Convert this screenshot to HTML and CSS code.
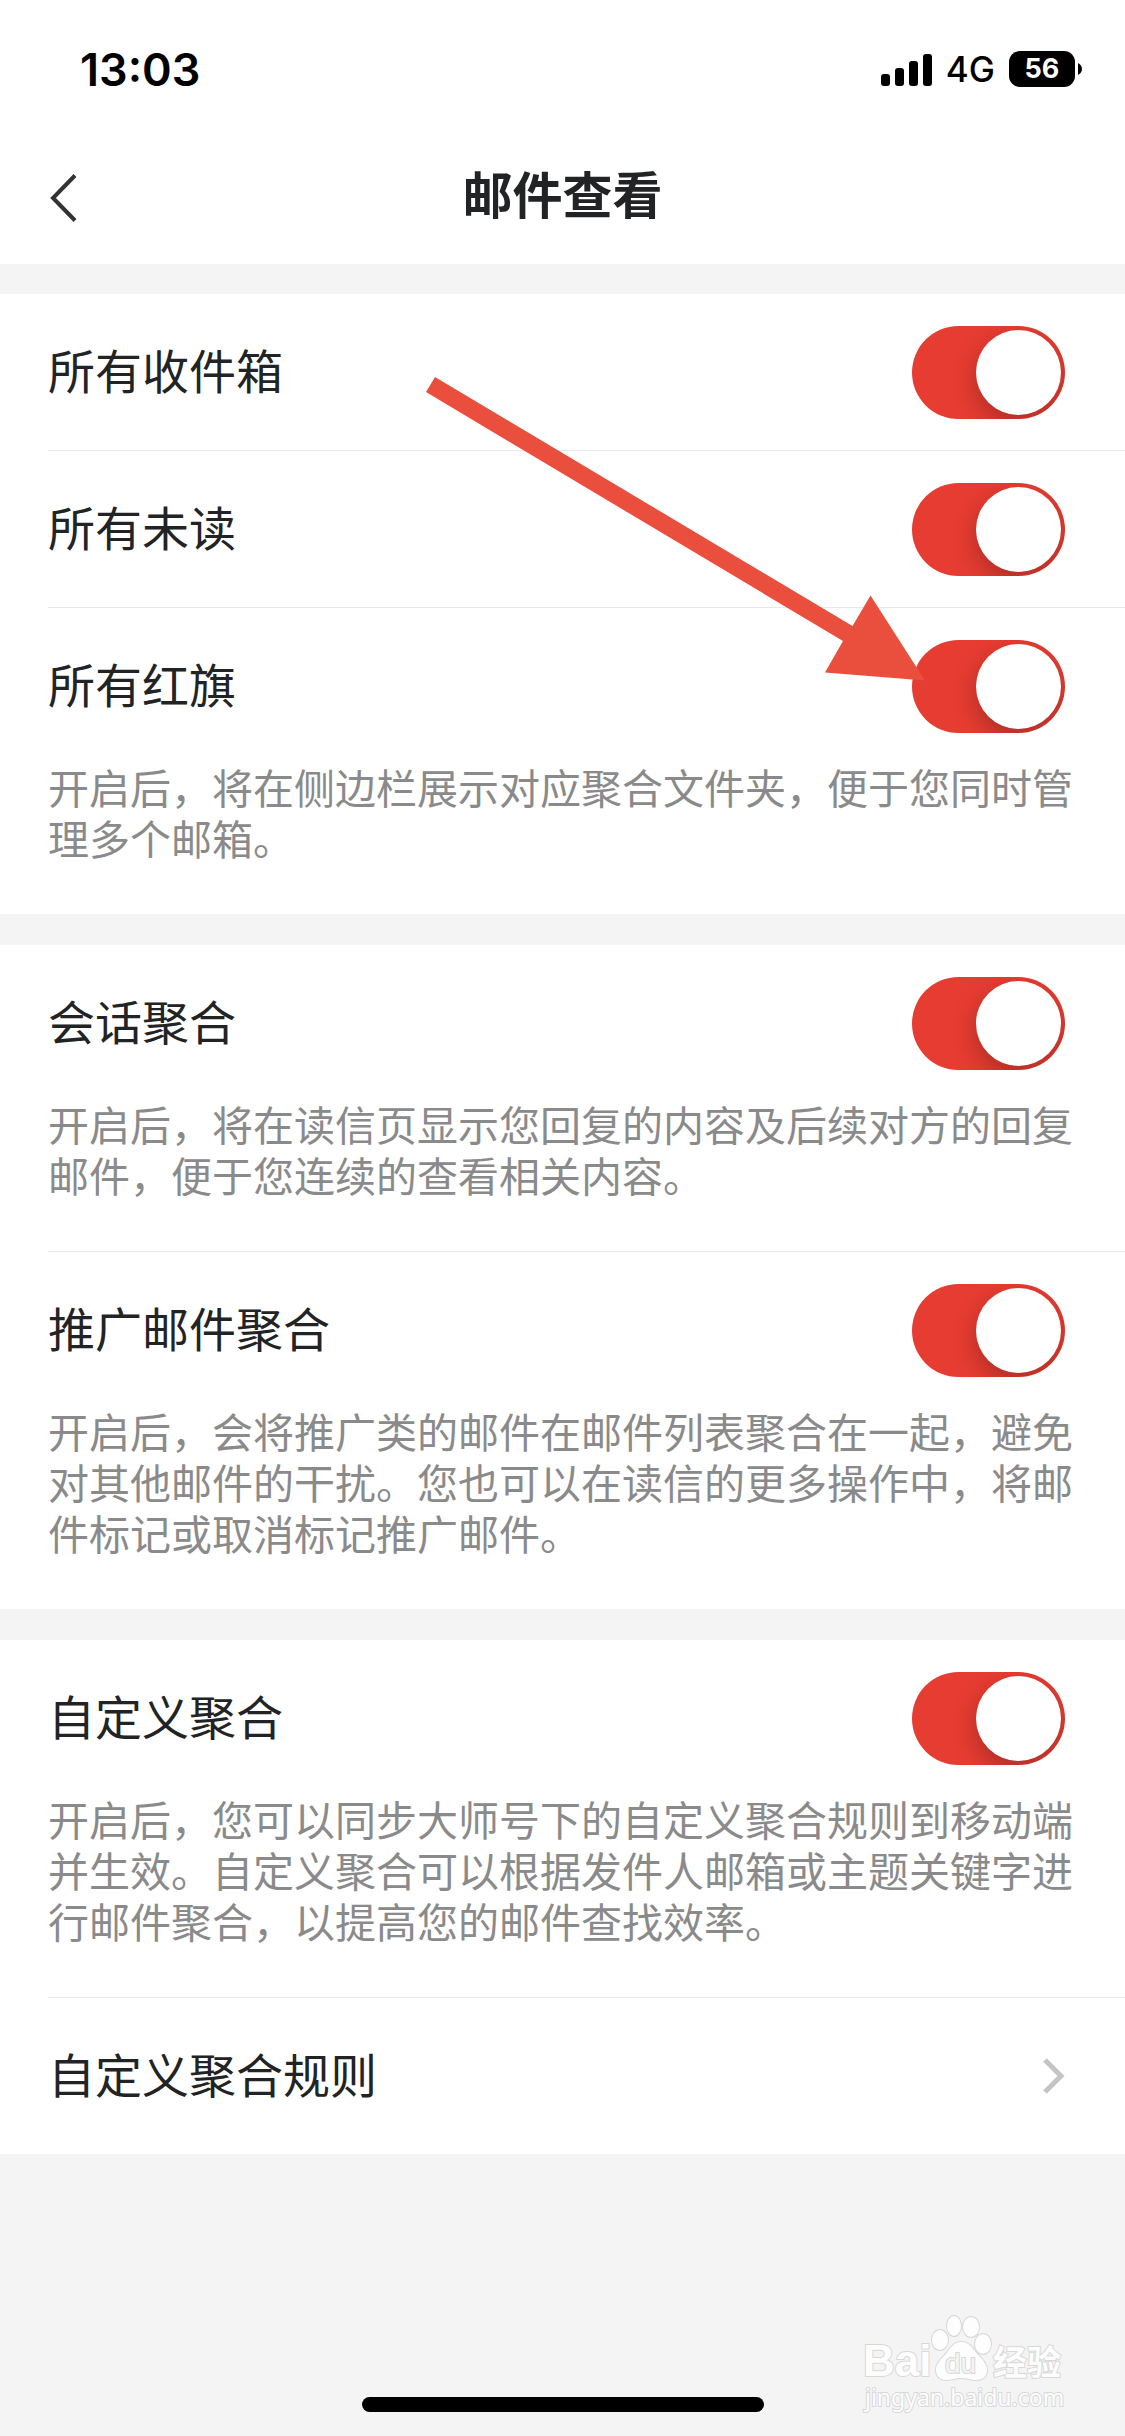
FILE: index.html
```
<!DOCTYPE html>
<html lang="zh-CN">
<head>
  <meta charset="UTF-8">
  <meta name="viewport" content="width=device-width, initial-scale=1">
  <title>邮件查看</title>
  <link rel="stylesheet" href="styles.css">
</head>
<body>
  <div class="page">
    <header class="header">
      <div class="status-bar">
        <span class="time">13:03</span>
        <div class="status-icons">
          <svg class="signal" viewBox="0 0 51 33" aria-hidden="true">
            <rect x="0" y="21" width="9" height="12" rx="3"/>
            <rect x="14" y="15" width="9" height="18" rx="3"/>
            <rect x="28" y="8" width="9" height="25" rx="3"/>
            <rect x="42" y="1" width="9" height="32" rx="3"/>
          </svg>
          <span class="network">4G</span>
          <div class="battery">
            <span class="battery-level">56</span>
            <svg class="battery-tip" viewBox="0 0 4 12" aria-hidden="true">
              <path d="M0 0c2 1 4 3 4 6s-2 5-4 6z"/>
            </svg>
          </div>
        </div>
      </div>
      <nav class="nav-bar">
        <button type="button" class="back-btn" aria-label="返回">
          <svg viewBox="0 0 28 48" aria-hidden="true">
            <path d="M25 1.500L3 24l22 22.500"/>
          </svg>
        </button>
        <h1 class="nav-title">邮件查看</h1>
      </nav>
    </header>

    <main class="settings">
      <section class="group">
        <div class="item">
          <div class="row">
            <label class="name" for="allInbox">所有收件箱</label>
            <input type="checkbox" class="switch" id="allInbox" checked>
          </div>
        </div>
        <div class="item">
          <div class="row">
            <label class="name" for="allUnread">所有未读</label>
            <input type="checkbox" class="switch" id="allUnread" checked>
          </div>
        </div>
        <div class="item">
          <div class="row">
            <label class="name" for="allFlagged">所有红旗</label>
            <input type="checkbox" class="switch" id="allFlagged" checked>
          </div>
          <p class="desc">开启后，将在侧边栏展示对应聚合文件夹，便于您同时管理多个邮箱。</p>
        </div>
        <!-- pointer to the red flag switch -->
        <svg class="arrow" viewBox="0 0 500 305" aria-hidden="true">
          <path d="M10 1L427.500 250 445.500 219.500 500 304.500 400 296.500 418 265 1 16z"/>
        </svg>
      </section>

      <section class="group">
        <div class="item">
          <div class="row">
            <label class="name" for="thread">会话聚合</label>
            <input type="checkbox" class="switch" id="thread" checked>
          </div>
          <p class="desc">开启后，将在读信页显示您回复的内容及后续对方的回复邮件，便于您连续的查看相关内容。</p>
        </div>
        <div class="item">
          <div class="row">
            <label class="name" for="promo">推广邮件聚合</label>
            <input type="checkbox" class="switch" id="promo" checked>
          </div>
          <p class="desc">开启后，会将推广类的邮件在邮件列表聚合在一起，避免对其他邮件的干扰。您也可以在读信的更多操作中，将邮件标记或取消标记推广邮件。</p>
        </div>
      </section>

      <section class="group">
        <div class="item">
          <div class="row">
            <label class="name" for="custom">自定义聚合</label>
            <input type="checkbox" class="switch" id="custom" checked>
          </div>
          <p class="desc">开启后，您可以同步大师号下的自定义聚合规则到移动端并生效。自定义聚合可以根据发件人邮箱或主题关键字进行邮件聚合，以提高您的邮件查找效率。</p>
        </div>
        <div class="item">
          <a class="row" href="#rules">
            <span class="name">自定义聚合规则</span>
            <svg class="chevron" viewBox="0 0 22 36" aria-hidden="true">
              <path d="M2 2l16 16L2 34"/>
            </svg>
          </a>
        </div>
      </section>
    </main>

    <footer class="footer">
      <svg class="watermark" viewBox="0 0 210 104" aria-hidden="true">
        <text class="wm-logo" x="3" y="60">Bai</text>
        <g class="wm-paw">
          <ellipse cx="80" cy="24" rx="8" ry="10"/>
          <ellipse cx="94" cy="10" rx="7" ry="10"/>
          <ellipse cx="111" cy="11" rx="8" ry="10"/>
          <ellipse cx="123" cy="28" rx="8" ry="10"/>
          <path d="M101 26c9 0 12 7 17 13 5 5 9 9 9 15 0 7-5 10-11 10-5 0-9-2-15-2s-10 2-15 2c-6 0-10-4-10-10s4-10 9-15c5-6 8-13 16-13z"/>
        </g>
        <text class="wm-du" x="85" y="57">du</text>
        <text class="wm-cn" x="133" y="59">经验</text>
        <text class="wm-url" x="5" y="90">jingyan.baidu.com</text>
      </svg>
      <div class="home-indicator"></div>
    </footer>
  </div>
</body>
</html>
```
FILE: styles.css
```
* {
  box-sizing: border-box;
}

body {
  margin: 0;
  background-color: #f4f4f4;
  color: #222325;
  font-family: "Noto Sans CJK SC", sans-serif;
}

.page {
  display: flex;
  flex-direction: column;
  min-height: 100vh;
}

/* header */
.header {
  background-color: #fff;
}

.status-bar {
  display: flex;
  align-items: center;
  justify-content: space-between;
  height: 132px;
  padding: 6px 43px 0 80px;
  color: #000;
  font-family: Inter, sans-serif;
}

.time {
  font-size: 45px;
  font-weight: 600;
}

.status-icons {
  display: flex;
  align-items: center;
  gap: 14px;
}

.signal {
  width: 51px;
  height: 33px;
}

.network {
  font-size: 35px;
  font-weight: 500;
}

.battery {
  display: flex;
  align-items: center;
  gap: 3px;
}

.battery-level {
  width: 66px;
  border-radius: 11px;
  background-color: #000;
  color: #fff;
  font-size: 27px;
  font-weight: 700;
  line-height: 36px;
  text-align: center;
}

.battery-tip {
  width: 4px;
  height: 12px;
}

.nav-bar {
  display: grid;
  grid-template-columns: 96px 1fr 96px;
  align-items: center;
  height: 132px;
}

.back-btn {
  display: flex;
  padding: 0 0 0 50px;
  border: none;
  background: none;
  cursor: pointer;
}

.back-btn svg {
  width: 28px;
  height: 48px;
  fill: none;
  stroke: #333;
  stroke-width: 4;
}

.nav-title {
  margin: 0;
  padding-bottom: 12px;
  font-size: 50px;
  font-weight: 600;
  line-height: 60px;
  text-align: center;
}

/* setting groups */
.settings {
  display: flex;
  flex-direction: column;
  gap: 31px;
  padding-top: 30px;
}

.group {
  position: relative;
  padding-left: 48px;
  background-color: #fff;
}

.item + .item {
  border-top: 1px solid #e8e8e9;
}

.row {
  display: flex;
  align-items: center;
  justify-content: space-between;
  height: 156px;
  padding-right: 60px;
  color: #222325;
  font-size: 47px;
  text-decoration: none;
}

.name {
  padding-bottom: 7px;
}

.desc {
  margin: -3px 0 0;
  padding: 0 48px 51px 0;
  color: #8a8a8b;
  font-size: 41px;
  line-height: 51px;
}

.switch {
  appearance: none;
  flex: none;
  width: 153px;
  height: 93px;
  margin: 0;
  padding: 4px;
  border-radius: 47px;
  background-color: #ddd;
  overflow: hidden;
  contain: paint;
  cursor: pointer;
}

.switch::before {
  content: "";
  display: block;
  width: 85px;
  height: 85px;
  border-radius: 50%;
  background-color: #fff;
  box-shadow: 0 9px 24px rgba(0, 0, 0, 0.25);
}

.switch:checked {
  background-color: #e73c31;
}

.switch:checked::before {
  margin-left: auto;
}

.chevron {
  width: 22px;
  height: 36px;
  fill: none;
  stroke: #c4c4c6;
  stroke-width: 5;
}

.arrow {
  position: absolute;
  top: 82px;
  right: 200px;
  width: 500px;
  height: 305px;
  fill: #ea4e3c;
  pointer-events: none;
}

/* bottom area */
.footer {
  position: relative;
  display: flex;
  flex: 1;
  align-items: flex-end;
  justify-content: center;
  padding: 96px 0 24px;
}

.home-indicator {
  width: 402px;
  height: 15px;
  border-radius: 8px;
  background-color: #000;
}

.watermark {
  position: absolute;
  right: 55px;
  bottom: 16px;
  width: 210px;
  height: 104px;
  overflow: visible;
  fill: #fdfdfd;
  stroke: #d8d8d8;
  stroke-width: 2;
  paint-order: stroke;
}

.wm-logo {
  font: bold 44px "Liberation Sans", sans-serif;
}

.wm-du {
  fill: #f4f4f4;
  font: 28px "Liberation Sans", sans-serif;
}

.wm-cn {
  font: bold 34px "Noto Sans CJK SC", sans-serif;
}

.wm-url {
  font: 23px "Noto Sans", sans-serif;
}
```
